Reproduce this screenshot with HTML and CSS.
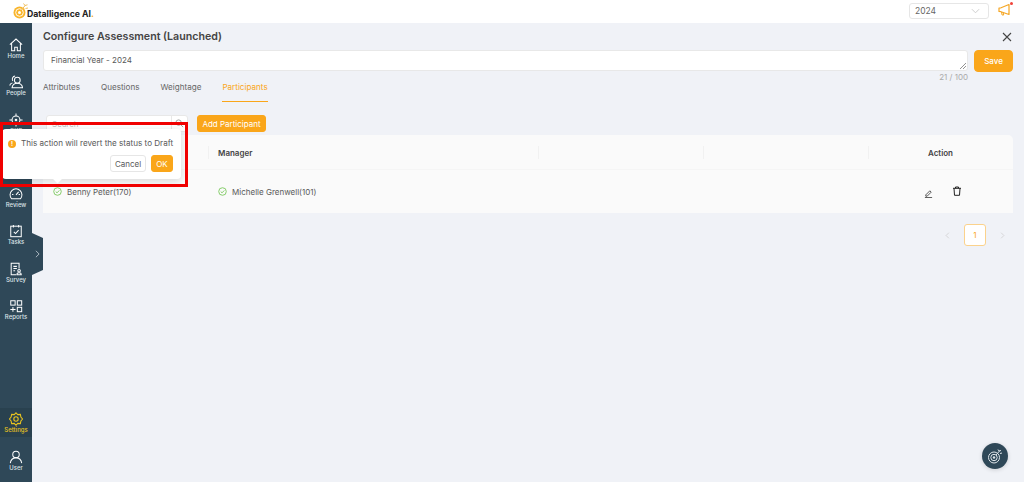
FILE: index.html
```html
<!DOCTYPE html>
<html lang="en">
<head>
<meta charset="utf-8">
<title>Configure Assessment</title>
<link rel="stylesheet" href="styles.css">
</head>
<body>
<header class="topbar">
  <div class="logo">
    <svg class="logo-mark" viewBox="0 0 17 17" width="17" height="17"><circle cx="6.500" cy="10.500" r="6" fill="#f9b52c"/><circle cx="6.500" cy="10.500" r="3.800" fill="none" stroke="#fff" stroke-width=".9"/><circle cx="6.500" cy="10.500" r="1.500" fill="#fff"/><path d="M8.500 8l4-5M10.500 1.500l1.500 2 2.500-.7M12.500 6.500l2.500-.5" stroke="#f0c060" stroke-width="1" fill="none"/></svg>
    <span class="logo-text">Datalligence AI<span class="logo-dot">.</span></span>
  </div>
  <div class="top-right">
    <div class="year-select"><span>2024</span>
      <svg viewBox="0 0 10 6" width="9" height="6"><path d="M1 1l4 4 4-4" fill="none" stroke="#c8c8c8" stroke-width="1"/></svg>
    </div>
    <div class="announce">
      <svg viewBox="0 0 14 14" width="14" height="14"><path d="M1 5v3.500l2 .2 8 2.800V1.500L3 4.800z" fill="none" stroke="#f5a623" stroke-width="1.200" stroke-linejoin="round"/><path d="M3.500 9l.6 3h1.600l-.5-2.400" fill="none" stroke="#f5a623" stroke-width="1"/></svg>
      <span class="announce-dot"></span>
    </div>
  </div>
</header>

<div class="shell">
  <nav class="sidebar">
    <div class="nav-top">
      <a class="nav-item"><svg viewBox="0 0 16 16" width="14" height="14"><path d="M1 7.500L8 1.200l7 6.300M3 6v8.500h3.500v-4h3v4H13V6" class="ic"/></svg><span>Home</span></a>
      <a class="nav-item"><svg viewBox="0 0 16 16" width="14" height="14"><circle cx="9.500" cy="6" r="3.300" class="ic"/><path d="M3.500 14.500c.5-3.500 3-5.200 6-5.200s5.500 1.700 6 5.200zM7 1.200a3.500 3.500 0 0 0-2.500 5.500M4 9c-1.700.5-2.800 1.500-3.200 3" class="ic"/></svg><span>People</span></a>
      <a class="nav-item"><svg viewBox="0 0 16 16" width="14" height="14"><circle cx="8" cy="8" r="4.500" class="ic"/><circle cx="8" cy="8" r="1.500" fill="#fff"/><path d="M8 .5v3M8 12.500v3M.5 8h3M12.500 8h3" class="ic"/></svg><span>OKR</span></a>
      <a class="nav-item"><svg viewBox="0 0 16 16" width="14" height="14"><circle cx="8" cy="8" r="6" class="ic"/></svg><span>1:1</span></a>
      <a class="nav-item"><svg viewBox="0 0 16 16" width="14" height="14"><path d="M3 13.500a6.800 6.800 0 1 1 10 0z" class="ic"/><path d="M8 9l3-3.500M3.500 8.500h1.500M11 8.500h1.500" class="ic"/></svg><span>Review</span></a>
      <a class="nav-item"><svg viewBox="0 0 16 16" width="14" height="14"><rect x="2" y="2.500" width="12" height="12" class="ic"/><path d="M5 1v3M11 1v3M5.500 9l2 2 3.500-4" class="ic"/></svg><span>Tasks</span></a>
      <a class="nav-item"><svg viewBox="0 0 16 16" width="14" height="14"><path d="M8 14.500H2.500v-13h9v6M5 5h4M5 7.500h4M5 10h2" class="ic"/><circle cx="11.500" cy="10" r="1.500" class="ic"/><path d="M9 14.500c0-3 5-3 5 0z" class="ic"/></svg><span>Survey</span></a>
      <a class="nav-item"><svg viewBox="0 0 16 16" width="14" height="14"><rect x="2" y="2" width="5" height="5" class="ic"/><rect x="9.500" y="2" width="5" height="5" class="ic"/><rect x="9.500" y="9.500" width="5" height="5" class="ic"/><path d="M4.500 9v5.500M1.500 12h6" class="ic"/></svg><span>Reports</span></a>
    </div>
    <div class="nav-bottom">
      <a class="nav-item nav-active"><svg viewBox="0 0 16 16" width="14" height="14"><path d="M8 1l2 2 3-.2.600 2.900L15.500 8l-1.900 2.300L13 13.200 10 13l-2 2-2-2-3 .2-.6-2.900L.5 8l1.900-2.300L3 2.800 6 3z" class="ic-y"/><circle cx="8" cy="8" r="2.500" class="ic-y"/></svg><span>Settings</span></a>
      <a class="nav-item nav-user"><svg viewBox="0 0 16 16" width="14" height="14"><circle cx="8" cy="5" r="3.700" class="ic"/><path d="M1.500 15c.5-4 3-6 6.500-6s6 2 6.500 6" class="ic"/></svg><span>User</span></a>
    </div>
    <div class="nav-toggle"><svg viewBox="0 0 6 10" width="5" height="8"><path d="M1 1l4 4-4 4" fill="none" stroke="#c9d3da" stroke-width="1"/></svg></div>
  </nav>

  <main class="content">
    <div class="title-row">
      <h1>Configure Assessment (Launched)</h1>
      <svg class="close" viewBox="0 0 10 10" width="10" height="10"><path d="M1 1l8 8M9 1l-8 8" stroke="#444" stroke-width="1.100"/></svg>
    </div>
    <div class="name-row">
      <div class="name-col">
        <div class="name-input">Financial Year - 2024
          <svg class="resize" viewBox="0 0 6 6" width="6" height="6"><path d="M0 6l6-6M3 6l3-3" stroke="#777" stroke-width=".8"/></svg>
        </div>
        <div class="counter">21 / 100</div>
      </div>
      <button class="btn btn-save">Save</button>
    </div>
    <div class="tabs">
      <span class="tab">Attributes</span>
      <span class="tab">Questions</span>
      <span class="tab">Weightage</span>
      <span class="tab tab-active">Participants</span>
    </div>
    <div class="tools">
      <div class="search"><span class="search-text">Search</span>
        <span class="search-btn"><svg viewBox="0 0 10 10" width="9" height="9"><circle cx="4" cy="4" r="3" fill="none" stroke="#999"/><path d="M6.500 6.500L9 9" stroke="#999"/></svg></span>
      </div>
      <button class="btn btn-add">Add Participant</button>
    </div>
    <div class="table">
      <div class="tr th">
        <div class="td">Employee</div>
        <div class="td">Manager</div>
        <div class="td"></div>
        <div class="td"></div>
        <div class="td"></div>
        <div class="td td-action">Action</div>
      </div>
      <div class="tr tb">
        <div class="td"><svg class="ok" viewBox="0 0 10 10" width="9" height="9"><circle cx="5" cy="5" r="4.200" fill="none" stroke="#7ac85c"/><path d="M3 5l1.500 1.500L7 3.800" fill="none" stroke="#7ac85c"/></svg>Benny Peter(170)</div>
        <div class="td"><svg class="ok" viewBox="0 0 10 10" width="9" height="9"><circle cx="5" cy="5" r="4.200" fill="none" stroke="#7ac85c"/><path d="M3 5l1.500 1.500L7 3.800" fill="none" stroke="#7ac85c"/></svg>Michelle Grenwell(101)</div>
        <div class="td"></div>
        <div class="td"></div>
        <div class="td"></div>
        <div class="td td-icons">
          <svg class="edit" viewBox="0 0 10 10" width="9" height="9"><path d="M2 6.500L6.500 2 8 3.500 3.500 8H2z" fill="none" stroke="#333" stroke-width=".9"/><path d="M1 9.500h8" fill="none" stroke="#333" stroke-width=".9"/></svg>
          <svg class="trash" viewBox="0 0 10 10" width="10" height="10"><path d="M1 2.300h8M3.500 2.300V1h3v1.300M2 2.300l.5 7h5l.5-7" fill="none" stroke="#222" stroke-width="1"/></svg>
        </div>
      </div>
    </div>
    <div class="pager">
      <svg viewBox="0 0 6 10" width="5" height="7"><path d="M5 1L1 5l4 4" fill="none" stroke="#ccc"/></svg>
      <span class="page">1</span>
      <svg viewBox="0 0 6 10" width="5" height="7"><path d="M1 1l4 4-4 4" fill="none" stroke="#ccc"/></svg>
    </div>
  </main>
</div>

<div class="popover">
  <div class="pop-msg"><span class="warn">!</span>This action will revert the status to Draft</div>
  <div class="pop-btns"><button class="btn-cancel">Cancel</button><button class="btn btn-ok">OK</button></div>
</div>
<div class="highlight"></div>
<div class="fab"><svg viewBox="0 0 16 16" width="16" height="16"><circle cx="7" cy="9.500" r="5.500" fill="none" stroke="#dfe5e9" stroke-width="1"/><circle cx="7" cy="9.500" r="3.200" fill="none" stroke="#dfe5e9" stroke-width="1"/><circle cx="7" cy="9.500" r="1.200" fill="#dfe5e9"/><path d="M9 7l3.500-4M11 1.500l1 1.500 2-.5M13 5.500l2-.5" stroke="#dfe5e9" fill="none"/></svg></div>
</body>
</html>
```
FILE: styles.css
```css
* { box-sizing: border-box; }
html, body { margin: 0; height: 482px; overflow: hidden; }
body { font-family: Inter, "Liberation Sans", sans-serif; font-size: 8px; color: #595959; background: #f0f2f7; position: relative; }

.topbar { height: 23px; background: #fff; display: flex; justify-content: space-between; align-items: center; padding: 0 12px 0 13px; }
.logo { display: flex; align-items: flex-start; height: 23px; padding-top: 2px; }
.logo-mark { display: block; }
.logo-text { font-size: 8.700px; line-height: 12px; font-weight: 700; color: #222; margin: 6px 0 0 -3px; }
.logo-dot { color: #f5a623; }
.top-right { display: flex; align-items: center; gap: 9px; }
.year-select { width: 80px; height: 16px; border: 1px solid #e6e6e6; border-radius: 3px; display: flex; align-items: center; justify-content: space-between; padding: 0 8px 0 5px; font-size: 8.500px; color: #666; margin-top: -1px; }
.announce { position: relative; width: 14px; height: 14px; margin-top: -3px; }
.announce svg { display: block; }
.announce-dot { position: absolute; right: -1px; top: -1px; width: 3px; height: 3px; border-radius: 50%; background: #f0433a; }

.shell { display: flex; height: 459px; }
.sidebar { width: 32px; background: #2f4858; display: flex; flex-direction: column; justify-content: space-between; position: relative; flex: none; padding-top: 15px; }
.nav-top, .nav-bottom { display: flex; flex-direction: column; }
.nav-item { height: 37.300px; display: flex; flex-direction: column; align-items: center; justify-content: flex-start; color: #dbe2e7; font-size: 6px; line-height: 8px; font-weight: 500; }
.nav-item svg { display: block; flex: none; }
.ic { fill: none; stroke: #fff; stroke-width: 1.150; }
.ic-y { fill: none; stroke: #e8c41f; stroke-width: 1.250; }
.nav-active { color: #e8c41f; background: #29414f; height: 29px; margin-bottom: 13px; padding-top: 4px; }
.nav-user { height: 32px; }
.nav-toggle { position: absolute; left: 32px; top: 210px; width: 11px; height: 42px; background: #2f4858; clip-path: polygon(0 0, 100% 5px, 100% 37px, 0 100%); display: flex; align-items: center; justify-content: center; }

.content { flex: 1; min-width: 0; padding: 6px 11px 0; }
.title-row { display: flex; justify-content: space-between; align-items: center; height: 15px; padding-right: 1px; }
h1 { margin: 0; font-size: 10.650px; line-height: 15px; font-weight: 600; color: #444; }
.name-row { display: flex; gap: 6px; margin-top: 6px; }
.name-col { flex: 1; min-width: 0; }
.name-input { height: 21px; background: #fff; border: 1px solid #e8e8e8; border-radius: 3px; padding: 0 7px; line-height: 18px; font-size: 8px; color: #595959; position: relative; }
.resize { position: absolute; right: 1px; bottom: 1px; }
.counter { text-align: right; font-size: 8px; line-height: 11px; color: #aaa; margin-top: 1px; }
.btn { background: #faa61a; border: 1px solid #faa61a; color: #fff; font-family: inherit; border-radius: 3px; padding: 0; }
.btn-save { width: 39px; height: 22px; font-size: 8px; font-weight: 500; flex: none; border-radius: 4px; }
.tabs { display: flex; gap: 21px; margin-top: -2px; height: 21px; }
.tab { font-size: 8.100px; line-height: 12px; color: #666; height: 21px; }
.tab-active { color: #faa61a; border-bottom: 1px solid #faa61a; }
.tools { display: flex; gap: 9px; margin-top: 13px; height: 17px; align-items: stretch; }
.search { width: 142px; margin-left: 3px; background: #fff; border: 1px solid #e8e8e8; border-radius: 3px; display: flex; justify-content: space-between; align-items: center; }
.search-text { padding-left: 5px; color: #bbb; }
.search-btn { width: 16px; height: 100%; border-left: 1px solid #e8e8e8; display: flex; align-items: center; justify-content: center; }
.btn-add { width: 69px; font-size: 8px; }
.table { margin-top: 3px; background: #fafafa; border-radius: 5px 5px 0 0; }
.tr { display: flex; }
.td { width: 165px; padding-left: 10px; display: flex; align-items: center; position: relative; flex: none; }
.th { height: 35px; border-bottom: 1px solid #f5f5f5; font-weight: 600; color: #444; }
.th .td { height: 100%; padding-top: 1px; }
.th .td + .td::before { content: ""; position: absolute; left: 0; top: 11px; height: 13px; width: 1px; background: #f1f1f1; }
.th .td:nth-child(3)::before { display: none; }
.tb { height: 43px; }
.ok { margin-right: 5px; flex: none; }
.th .td-action { flex: 1; justify-content: center; padding: 1px 0 0; }
.td-icons { flex: 1; padding-left: 56px; gap: 19px; }
.edit { margin-top: 3px; }
.trash { margin-top: -1px; }
.pager { display: flex; justify-content: flex-end; align-items: center; gap: 14px; margin-top: 11px; padding-right: 8px; }
.page { width: 22px; height: 22px; border: 1px solid #fbd28c; border-radius: 3px; background: #fff; color: #faa61a; display: flex; align-items: center; justify-content: center; }

.popover { position: absolute; left: 2px; top: 129px; width: 179px; height: 50px; background: #fff; border-radius: 4px; box-shadow: 0 2px 8px rgba(0,0,0,.14); padding: 8px 8px 0 6px; }
.popover::after { content: ""; position: absolute; left: 52px; bottom: -3px; width: 7px; height: 7px; background: #fff; transform: rotate(45deg); }
.pop-msg { display: flex; align-items: center; font-size: 8.100px; line-height: 13px; color: #595959; height: 13px; white-space: nowrap; }
.warn { width: 8px; height: 8px; border-radius: 50%; background: #faa61a; color: #fff; font-size: 6px; line-height: 8px; text-align: center; margin-right: 5px; font-weight: 700; flex: none; }
.pop-btns { display: flex; justify-content: flex-end; gap: 5px; margin-top: 5px; }
.btn-cancel { width: 36px; height: 17px; background: #fff; border: 1px solid #e6e6e6; border-radius: 3px; font: 8px Inter, "Liberation Sans", sans-serif; color: #595959; padding: 0; }
.btn-ok { width: 22px; height: 17px; font-size: 8px; }
.highlight { position: absolute; left: 0; top: 122px; width: 188px; height: 65px; border: 3px solid #f00000; pointer-events: none; }
.fab { position: absolute; left: 982px; top: 443px; width: 26px; height: 26px; border-radius: 50%; background: #2f4858; display: flex; align-items: center; justify-content: center; box-shadow: 0 1px 4px rgba(0,0,0,.15); }
```
